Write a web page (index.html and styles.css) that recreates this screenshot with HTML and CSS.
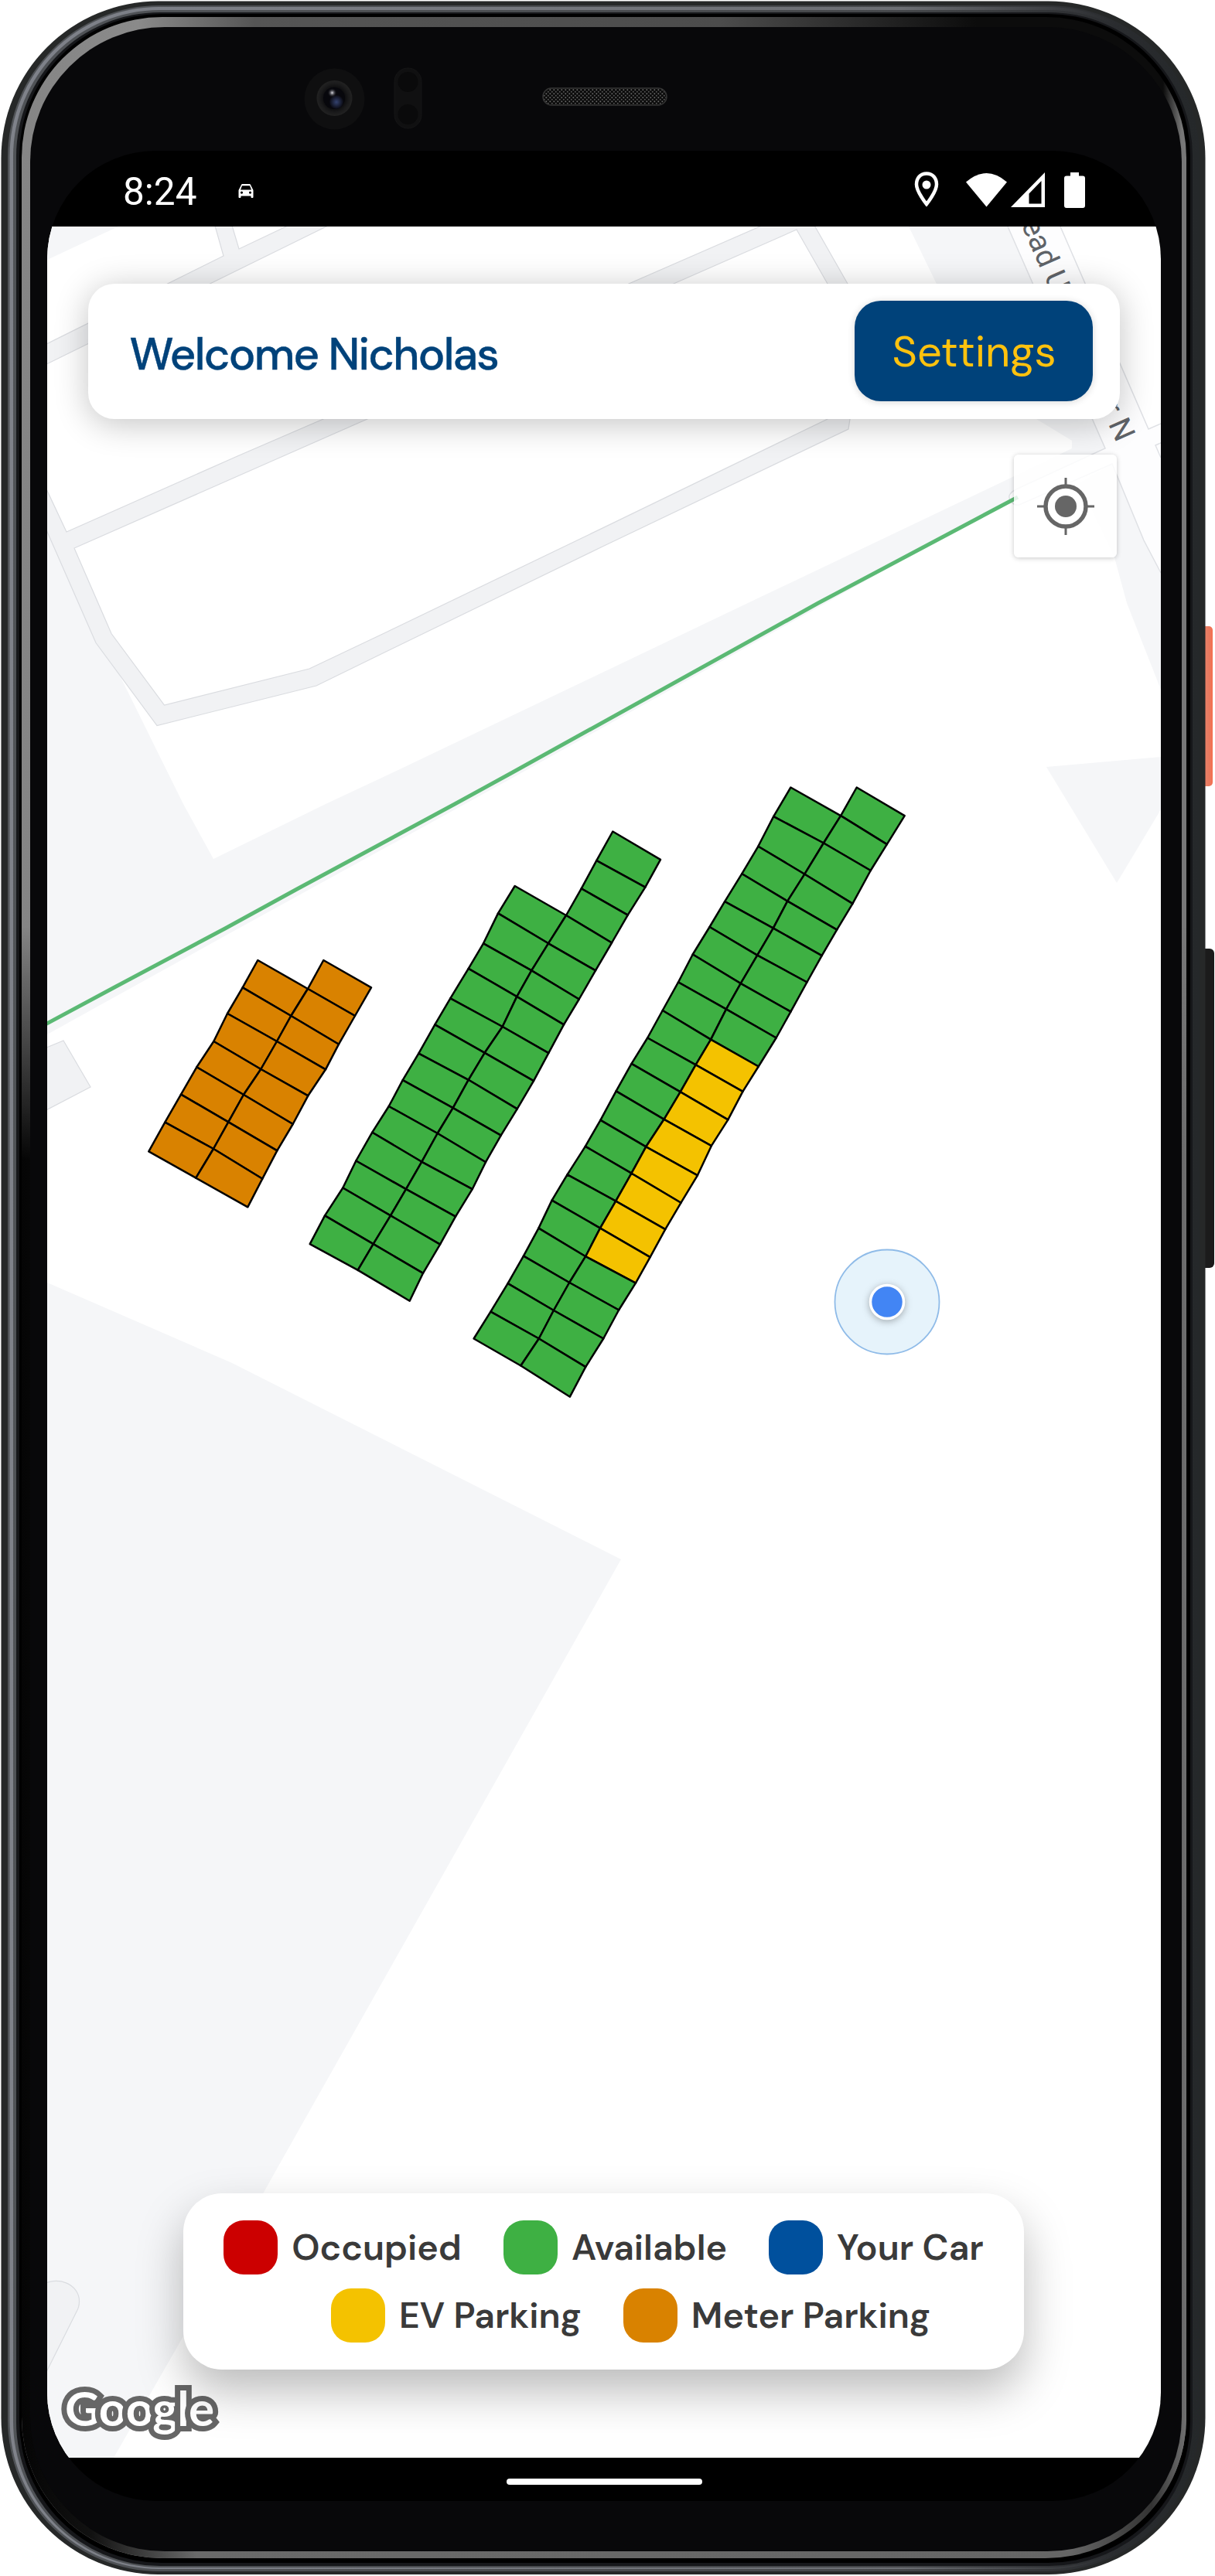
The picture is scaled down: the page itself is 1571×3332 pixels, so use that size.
FILE: index.html
```html
<!DOCTYPE html>
<html lang="en">
<head>
<meta charset="utf-8">
<title>Campus Parking</title>
<link rel="stylesheet" href="styles.css">
</head>
<body>
<main class="device">
  <svg class="shell" viewBox="0 0 1571 3332" aria-hidden="true">
    <defs>
      <linearGradient id="rim" x1="0" x2="1" y1="0" y2="0">
        <stop offset="0" stop-color="#505357"/><stop offset=".75" stop-color="#46484b"/><stop offset=".93" stop-color="#2a2c2f"/><stop offset="1" stop-color="#25282a"/>
      </linearGradient>
      <linearGradient id="rimHi" x1="0" x2="1" y1="0" y2="0">
        <stop offset="0" stop-color="#7f828a"/><stop offset=".75" stop-color="#6c6e73"/><stop offset=".93" stop-color="#2a2c2f"/><stop offset="1" stop-color="#25282a"/>
      </linearGradient>
      <linearGradient id="glint" x1="0" x2="1" y1="0" y2="0">
        <stop offset="0" stop-color="#858585"/><stop offset=".1" stop-color="#8a8a8a"/><stop offset=".2" stop-color="#555"/><stop offset=".6" stop-color="#4c4c4c"/><stop offset=".82" stop-color="#0c0c0c"/><stop offset=".98" stop-color="#0c0c0c"/><stop offset=".996" stop-color="#777"/>
      </linearGradient>
      <linearGradient id="glintLow" x1="0" x2="1" y1="0" y2="0">
        <stop offset="0" stop-color="#050505"/><stop offset=".06" stop-color="#111"/><stop offset=".15" stop-color="#6a6a6a"/><stop offset=".9" stop-color="#666"/><stop offset=".97" stop-color="#333"/><stop offset="1" stop-color="#707070"/>
      </linearGradient>
      <linearGradient id="fade" x1="0" x2="0" y1="0" y2="1">
        <stop offset=".36" stop-color="#000"/><stop offset=".45" stop-color="#fff"/>
      </linearGradient>
      <mask id="lower"><rect width="1571" height="3332" fill="url(#fade)"/></mask>
      <linearGradient id="power" x1="0" x2="1" y1="0" y2="0">
        <stop offset="0" stop-color="#f0694a"/><stop offset=".4" stop-color="#ec8268"/><stop offset=".7" stop-color="#e87a60"/><stop offset="1" stop-color="#f56f50"/>
      </linearGradient>
      <radialGradient id="lens"><stop offset="0" stop-color="#08080c"/><stop offset=".55" stop-color="#0b0b0d"/><stop offset=".8" stop-color="#1a1a1b"/><stop offset="1" stop-color="#222"/></radialGradient>
      <radialGradient id="blueGlow"><stop offset="0" stop-color="#34426f"/><stop offset="1" stop-color="#0a0a12"/></radialGradient>
      <radialGradient id="spark"><stop offset="0" stop-color="#e0e0e8"/><stop offset="1" stop-color="#101016" stop-opacity="0"/></radialGradient>
      <pattern id="mesh" width="5" height="5" patternUnits="userSpaceOnUse"><rect width="5" height="5" fill="#0b0b0b"/><circle cx="1.3" cy="1.3" r="1" fill="#666"/><circle cx="3.8" cy="3.8" r="1" fill="#555"/></pattern>
    </defs>
    <rect x="1550" y="810" width="18" height="207" rx="5" fill="url(#power)"/>
    <rect x="1550" y="1227" width="20" height="413" rx="6" fill="#1b1b1b"/>
    <rect x="1.5" y="1.5" width="1557" height="3328.5" rx="203" fill="#262828"/>
    <rect x="10" y="7" width="1541" height="3319" rx="196" fill="url(#rim)"/>
    <rect x="12.5" y="9" width="1536" height="3314" rx="193" fill="url(#rimHi)"/>
    <rect x="17" y="13" width="1529" height="3308" rx="189" fill="url(#rim)"/>
    <rect x="21" y="16" width="1521" height="3303" rx="186" fill="#16171a"/>
    <rect x="25" y="18" width="1514" height="3297" rx="184" fill="#000"/>
    <rect x="28" y="22" width="1506" height="3287" rx="182" fill="url(#glint)"/>
    <rect x="28" y="22" width="1506" height="3287" rx="182" fill="url(#glintLow)" mask="url(#lower)"/>
    <rect x="39" y="35" width="1489" height="3265" rx="174" fill="#08080a"/>
    <ellipse cx="432.500" cy="128" rx="39" ry="39.500" fill="#0f0f10"/>
    <circle cx="432.500" cy="127" r="23" fill="url(#lens)"/>
    <circle cx="432" cy="127" r="14" fill="#07070c"/>
    <circle cx="435" cy="132" r="9" fill="url(#blueGlow)"/>
    <circle cx="429.500" cy="120" r="6" fill="url(#spark)"/>
    <rect x="510" y="88" width="35" height="78" rx="17.500" fill="#101011" stroke="#151516"/>
    <circle cx="527.500" cy="106" r="13" fill="#0a0a0b"/><circle cx="527.500" cy="148" r="13" fill="#0a0a0b"/>
    <rect x="702" y="114" width="160" height="22" rx="11" fill="url(#mesh)" stroke="#333" stroke-width="1.500"/>
  </svg>

  <section class="screen">
    <header class="status">
      <span class="clock">8:24</span>
      <svg class="car" viewBox="0 0 20 18"><path fill="#fff" fill-rule="evenodd" d="M4 1Q4.300 0 5.300 0H14.700Q15.700 0 16 1L19.500 8V17Q19.500 18 18.500 18H17.500Q16.500 18 16.500 17V15.500H3.500V17Q3.500 18 2.500 18H1.500Q.5 18 .5 17V8ZM5 2.200 3 7.500H17L15 2.200ZM4.500 9.500A1.600 1.600 0 1 0 4.500 12.700A1.600 1.600 0 1 0 4.500 9.500ZM15.500 9.500A1.600 1.600 0 1 0 15.500 12.700A1.600 1.600 0 1 0 15.500 9.500Z"/></svg>
      <svg class="tray" viewBox="0 0 224 50" fill="#fff">
        <path d="M17.500 4.500C9.300 4.500 4.500 10.700 4.500 18.500C4.500 28 17.500 44 17.500 44S30.500 28 30.500 18.500C30.500 10.700 25.700 4.500 17.500 4.500Z" fill="none" stroke="#fff" stroke-width="4.500" transform="translate(-1.500 -1)"/>
        <circle cx="16" cy="18" r="5.500"/>
        <path d="M67 14.500Q93.500-8.500 120 14.500L93.500 46.500Z"/>
        <path fill-rule="evenodd" d="M125 47 169 2V47ZM148.500 29.500V42.500H164.500V13Z"/>
        <path d="M202 2H213V6.500H218Q221 6.500 221 9.500V45Q221 48 218 48H197Q194 48 194 45V9.500Q194 6.500 197 6.500H202Z"/>
      </svg>
    </header>

    <div class="map">
      <svg class="tiles" viewBox="61 293 1440 2886">
        <g class="area">
          <path d="M61 293H153L61 336Z"/>
          <path d="M1175 293H1303L1429 580L1310 645L661 1007L310 1200L61 1338V688L157 878L237 1040L276 1111L421 1040L500 1003L967 780L1305 619L1386 580V570L1340 542L1290 530Z"/>
          <path d="M1438 600 1479 699 1501 741V892L1457 780 1441 721 1395 625Z"/>
          <path d="M1353 992 1501 979V1047L1444 1142Z"/>
          <path d="M61 1659 300 1763 803 2017 361 2800 237 3022 147 3179H61Z"/>
        </g>
        <path class="street" d="M1303 293 1429 580 1318 631C1304 637 1302 643 1308 649Q1311 654 1318 653L1438 600 1479 699 1501 741V573L1494 576 1501 592V548L1485 555 1371 293Z"/>
        <path class="street-line" d="M1303 293 1429 580 1318 631C1304 637 1302 643 1308 649Q1311 654 1318 653L1438 600 1479 699 1501 741M1501 592 1494 576 1503 572M1501 548 1485 555 1371 293"/>
        <path class="lane" d="M55 447.500 289 331 276 285H298L309 322 370 293 400 280H450L422 293 55 473.500Z"/>
        <path class="lane" fill-rule="evenodd" d="M55 622 86 688 307 590 418 542 813 367 1010 281H1047L1096 367 1130 430 1099 542 1097 555 780 706.500 500 842.500 409 887 203 938.500 124 831.500 55 674ZM96 709 144 819.500 212.500 912 400 865 500 817.500 780 682.600 1070 542 1110 440 1070 367 1030 297 871 367 475 542Z"/>
        <path class="lane" d="M50 1359 82 1346 117 1406 50 1441Z"/>
        <path class="lane" d="M50 2958C74 2941 103 2955 102.500 2977Q102.500 2984 99 2990L50 3088Z"/>
        <path class="trail" d="M55 1327 150 1276 291 1201 384 1150 588 1040 661 1000 1058 780 1316 643"/>
        <text class="road-name" transform="translate(1320 290) rotate(66.300)">ead U</text>
        <text class="road-name" transform="translate(1423.500 527) rotate(66.300)">r N</text>
        <g id="lots"></g>
        <circle cx="1147" cy="1684" r="67.500" fill="#e6f3fb" stroke="#8fbbe8" stroke-width="1.800"/>
        <circle class="me" cx="1147" cy="1684" r="21.500"/>
        <text class="brand" x="84" y="3138" textLength="193">Google</text>
      </svg>
      <div class="overlay">
        <div class="welcome">
          <h1>Welcome Nicholas</h1>
          <button class="settings">Settings</button>
        </div>
        <button class="locate" aria-label="My location">
          <svg viewBox="-37 -37 74 74"><circle r="26" fill="none" stroke="#666" stroke-width="5.500"/><circle r="14" fill="#666"/><path d="M0-37V-26M0 37V26M-37 0H-26M37 0H26" stroke="#666" stroke-width="3"/></svg>
        </button>
        <div class="legend">
          <div class="row">
            <span class="key"><i class="occupied"></i><b>Occupied</b></span>
            <span class="key"><i class="available"></i><b>Available</b></span>
            <span class="key"><i class="yours"></i><b>Your Car</b></span>
          </div>
          <div class="row second">
            <span class="key"><i class="ev"></i><b>EV Parking</b></span>
            <span class="key"><i class="meter"></i><b>Meter Parking</b></span>
          </div>
        </div>
      </div>
    </div>
    <footer class="nav"><span></span></footer>
  </section>
</main>
<script src="lots.js"></script>
</body>
</html>
```
FILE: styles.css
```css
* { box-sizing: border-box; }
body { margin: 0; background: #fff; font-family: "DM Sans", "Open Sans", sans-serif; }
button { border: 0; padding: 0; font: inherit; }

.device { display: grid; width: 1571px; height: 3332px; overflow: hidden; }
.shell { grid-area: 1 / 1; width: 1571px; height: 3332px; display: block; }
.screen {
  grid-area: 1 / 1;
  width: 1440px;
  height: 3040px;
  margin: 195px 0 0 61px;
  border-radius: 140px;
  overflow: hidden;
  display: flex;
  flex-direction: column;
  background: #000;
}

.status { height: 98px; display: flex; align-items: flex-start; padding: 26px 95px 0 98px; color: #fff; }
.clock { font: 400 49.500px/54px Roboto, sans-serif; width: 149px; }
.car { width: 20px; height: 18px; margin-top: 17px; }
.tray { width: 224px; height: 50px; margin-left: auto; }

.map { flex: 1; display: grid; background: #fff; min-height: 0; }
.tiles { grid-area: 1 / 1; width: 1440px; height: 2886px; display: block; }
.area { fill: #f5f6f8; }
.lane { fill: #f1f2f4; stroke: #dadce0; stroke-width: 1.200; }
.street { fill: #fdfdfe; }
.street-line { fill: none; stroke: #dfe1e5; stroke-width: 1.500; }
.trail { fill: none; stroke: #5bb974; stroke-width: 5; }
.road-name { font: 400 39px Roboto, sans-serif; fill: #5f6368; }
.stall { stroke: #000; stroke-width: 2.500; stroke-linejoin: round; }
.stall.available { fill: #3eb043; }
.stall.ev { fill: #f4c200; }
.stall.meter { fill: #d98200; }
.me { fill: #4285f4; stroke: #fff; stroke-width: 3.500; filter: drop-shadow(0 2px 5px rgba(0, 0, 0, .3)); }
.brand { font: 700 62px Lato, sans-serif; fill: #fff; stroke: #666; stroke-width: 14; paint-order: stroke; }

.overlay { grid-area: 1 / 1; display: flex; flex-direction: column; align-items: center; padding: 73.500px 53px 114px; z-index: 1; }
.welcome {
  width: 1334px;
  height: 175.500px;
  border-radius: 34px;
  background: #fff;
  box-shadow: 0 6px 44px rgba(0, 0, 0, .24);
  display: flex;
  align-items: center;
  justify-content: space-between;
  padding: 0 35px 0 53.500px;
}
.welcome h1 { margin: 0 0 -7px; font: 500 58px/70px "DM Sans", Inter, sans-serif; letter-spacing: -1.750px; -webkit-text-stroke: .4px #00427a; color: #00427a; white-space: nowrap; }
.settings {
  width: 308px;
  height: 130px;
  border-radius: 34px;
  background: #00427a;
  color: #ffc20e;
  font-size: 56px;
  padding-left: 1px;
  box-shadow: 0 1px 10px rgba(0, 0, 0, .16);
}
.locate {
  align-self: flex-end;
  width: 133px;
  height: 133px;
  margin: 46px 4px 0 0;
  border-radius: 6px;
  background: rgba(255, 255, 255, .84);
  box-shadow: 0 1px 6px rgba(0, 0, 0, .22);
  display: flex;
  align-items: center;
  justify-content: center;
}
.locate svg { width: 74px; height: 74px; }
.legend {
  width: 1087px;
  height: 228px;
  margin: auto 1px 0 0;
  border-radius: 50px;
  background: #fff;
  box-shadow: 0 28px 60px rgba(0, 0, 0, .27);
  display: flex;
  flex-direction: column;
  justify-content: center;
  gap: 18px;
}
.row { display: flex; justify-content: center; gap: 54px; }
.second { padding-left: 70px; }
.key { display: flex; align-items: center; gap: 18px; height: 70px; }
.key i { width: 70px; height: 70px; border-radius: 26px; }
.key b { font-weight: 600; font-size: 46.500px; line-height: 70px; color: #3a3a3a; white-space: nowrap; }
.key .occupied { background: #c00; }
.key .available { background: #3eb043; }
.key .yours { background: #00509d; }
.key .ev { background: #f4c200; }
.key .meter { background: #d98200; }

.nav { height: 56px; display: flex; justify-content: center; padding-top: 27px; }
.nav span { width: 253px; height: 8px; border-radius: 4px; background: #fff; }
```
FILE: lots.js
```js
// Each lot is two columns of stalls sharing a spine. Points are x,y pairs listed
// from the top end to the bottom end, mapped onto the map by origin and scale.
const lots = [
  {
    x: 150, y: 1200, sx: 1 / 3, sy: 1 / 3, skip: 1, kind: () => 'meter',
    left: [550,126,491,232,432,333,379,441,313,541,252,647,190,755,127,868],
    mid: [805,126,744,237,679,342,624,441,562,549,495,648,436,754,378,858,310,971],
    right: [990,232,927,342,864,452,813,550,745,652,686,762,625,865,568,974,511,1084]
  },
  {
    x: 380, y: 1040, sx: 1 / 3, sy: 0.4273, skip: 3, kind: () => 'available',
    left: [857,248,792,331,735,422,677,498,607,588,547,668,484,755,422,836,368,915,304,994,241,1080,190,1162,120,1246,62,1332],
    mid: [1237,83,1174,171,1115,256,1056,337,987,422,922,504,865,583,809,674,740,753,677,835,617,920,557,997,496,1083,435,1166,375,1246,308,1332,248,1411],
    right: [1422,168,1363,252,1295,336,1233,420,1170,504,1106,591,1047,668,988,754,930,838,866,923,803,1003,744,1084,692,1166,627,1249,567,1333,501,1420,449,1504]
  },
  {
    x: 590, y: 1000, sx: 0.38265, sy: 0.52934, skip: 1,
    kind: (side, i) => side === 'right' && i >= 9 && i < 17 ? 'ev' : 'available',
    left: [1130,35,1072,106,1020,179,965,246,907,314,856,376,799,443,750,511,697,580,646,647,592,710,540,777,487,848,436,912,375,981,323,1044,278,1112,227,1180,174,1247,116,1316,59,1382],
    mid: [1353,35,1299,104,1241,171,1177,247,1119,313,1071,379,1017,445,961,514,912,577,860,651,809,713,757,779,702,846,641,913,592,978,539,1046,486,1112,437,1181,382,1245,329,1313,279,1382,218,1448],
    right: [1515,104,1455,174,1400,238,1339,319,1286,383,1235,446,1185,511,1130,583,1081,647,1021,717,968,778,918,847,862,911,815,983,759,1050,706,1115,655,1183,606,1246,549,1312,497,1382,437,1451,384,1524]
  }
];

const layer = document.getElementById('lots');

for (const lot of lots) {
  const at = (list, i) =>
    (lot.x + list[2 * i] * lot.sx).toFixed(1) + ',' + (lot.y + list[2 * i + 1] * lot.sy).toFixed(1);
  const stall = (a, b, ai, bi, kind) => {
    const p = document.createElementNS('http://www.w3.org/2000/svg', 'polygon');
    p.setAttribute('points', [at(a, ai), at(b, bi), at(b, bi + 1), at(a, ai + 1)].join(' '));
    p.setAttribute('class', 'stall ' + kind);
    layer.appendChild(p);
  };
  for (let i = 0; i < lot.left.length / 2 - 1; i++) stall(lot.left, lot.mid, i, i + lot.skip, lot.kind('left', i));
  for (let i = 0; i < lot.mid.length / 2 - 1; i++) stall(lot.mid, lot.right, i, i, lot.kind('right', i));
}
```
